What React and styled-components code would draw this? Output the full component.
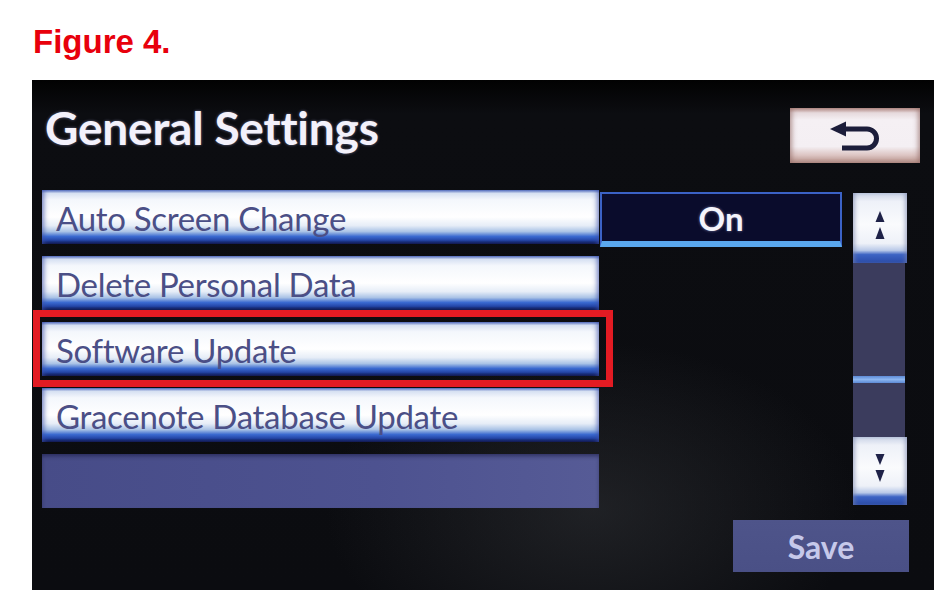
import styled, { createGlobalStyle } from 'styled-components'

const GlobalStyle = createGlobalStyle`
  html, body {
    margin: 0;
    padding: 0;
    background: #ffffff;
  }
`

const Page = styled.div`
  width: 947px;
  height: 607px;
  box-sizing: border-box;
  padding: 25px 0 0 32px;
  background: #ffffff;
  overflow: hidden;
`

const Caption = styled.h1`
  margin: 0 0 22px 1px;
  font-family: "Liberation Sans", Arial, sans-serif;
  font-weight: 700;
  font-size: 33px;
  line-height: 33px;
  color: #e8000c;
`

const Screen = styled.div`
  width: 902px;
  height: 510px;
  box-sizing: border-box;
  padding: 28px 14px 0 10px;
  display: flex;
  flex-direction: column;
  background:
    radial-gradient(ellipse 380px 240px at 560px 430px, rgba(48, 50, 54, 0.55), rgba(0, 0, 0, 0) 70%),
    linear-gradient(180deg, #020202 0px, #0c0d11 34px, #0b0c10 100%);
  font-family: Lato, "Open Sans", sans-serif;
`

const Header = styled.div`
  height: 82px;
  display: flex;
  justify-content: space-between;
  align-items: flex-start;
`

const Title = styled.h2`
  margin: -3px 0 0 3px;
  font-size: 46px;
  font-weight: 700;
  line-height: 1;
  color: #f3f1fb;
  letter-spacing: -0.2px;
  text-shadow: 0 0 3px rgba(200, 200, 255, 0.5);
`

const BackButton = styled.button`
  width: 130px;
  height: 55px;
  padding: 0;
  border: none;
  display: flex;
  align-items: center;
  justify-content: center;
  background: linear-gradient(180deg, #b48e88 0%, #e6d9dc 9%, #f5f0f4 22%, #f4eff3 70%, #dcc4c2 86%, #b38e86 100%);
  box-shadow: inset 4px 0 5px -2px rgba(150, 110, 105, 0.7), inset -4px 0 5px -2px rgba(150, 110, 105, 0.7);
`

const Body = styled.div`
  display: flex;
  align-items: flex-start;
`

const List = styled.div`
  width: 557px;
  display: flex;
  flex-direction: column;
  gap: 12px;
`

const Row = styled.div`
  position: relative;
  height: 54px;
  box-sizing: border-box;
  padding: 3px 0 0 14px;
  font-size: 33px;
  line-height: 51px;
  letter-spacing: -0.3px;
  color: #4b4f86;
  white-space: nowrap;
  background: ${p => p.$empty
    ? 'linear-gradient(90deg, #474c88 0%, #4d5290 60%, #565b96 100%)'
    : 'linear-gradient(180deg, #5670c0 0%, #d6e0f2 6%, #f4f7fc 18%, #ffffff 50%, #e6edf7 66%, #aac3e6 77%, #3b6ad0 86%, #2446a8 93%, #0d1345 100%)'};
  box-shadow: ${p => p.$empty
    ? 'inset 0 3px 4px -1px rgba(20, 22, 60, 0.6)'
    : 'inset 5px 0 5px -3px rgba(60, 80, 170, 0.7), inset -5px 0 5px -3px rgba(60, 80, 170, 0.7)'};

  ${p => p.$highlight && `
    &::after {
      content: '';
      position: absolute;
      left: -9px;
      top: -12px;
      right: -14px;
      bottom: -11px;
      border: 7px solid #e31b23;
      pointer-events: none;
    }
  `}
`

const ValueBox = styled.div`
  width: 242px;
  height: 55px;
  margin: 2px 0 0 1px;
  box-sizing: border-box;
  border: 2px solid #3b62c6;
  border-bottom: 6px solid #5aa8ee;
  background: #0a0c2c;
  display: flex;
  align-items: center;
  justify-content: center;
  font-size: 33px;
  font-weight: 700;
  color: #f4f4fb;
  text-shadow: 0 0 3px rgba(210, 210, 255, 0.5);
`

const ScrollColumn = styled.div`
  width: 54px;
  margin: 3px 0 0 11px;
  display: flex;
  flex-direction: column;
`

const ArrowButton = styled.div`
  height: ${p => p.$h}px;
  display: flex;
  align-items: center;
  justify-content: center;
  padding-bottom: 6px;
  box-sizing: border-box;
  background: linear-gradient(180deg, #c9d2e6 0%, #eef1f8 12%, #fafbfd 45%, #eef1f8 72%, #b9c9e8 82%, #3d64c4 88%, #2a4aa8 100%);
  box-shadow: inset 4px 0 4px -2px rgba(120, 130, 170, 0.6), inset -4px 0 4px -2px rgba(120, 130, 170, 0.6);
`

const Track = styled.div`
  position: relative;
  height: 174px;
  width: 52px;
  background: #3b3c5d;
`

const Thumb = styled.div`
  position: absolute;
  left: 0;
  right: 0;
  top: ${p => p.$offset}px;
  height: 7px;
  background: linear-gradient(180deg, #5d8ad6, #8cb6f0 50%, #5d8ad6);
`

const Footer = styled.div`
  margin-top: 12px;
  display: flex;
  justify-content: flex-end;
`

const SaveButton = styled.div`
  width: 176px;
  height: 52px;
  margin-right: 11px;
  display: flex;
  align-items: center;
  justify-content: center;
  background: linear-gradient(180deg, #4e548a 0%, #4a5086 100%);
  font-size: 32px;
  font-weight: 700;
  color: #c6c9ea;
`

function BackIcon () {
  return (
    <svg width='52' height='32' viewBox='0 0 52 32'>
      <polygon points='1,9 17,1.5 17,16.5' fill='#1c1d3a' />
      <path d='M15 9 H38 A9.5 9.5 0 0 1 38 28 H13' fill='none' stroke='#1c1d3a' strokeWidth='5' />
    </svg>
  )
}

function DoubleTriangle ({ down }) {
  return (
    <svg width='10' height='30' viewBox='0 0 10 30'>
      {down
        ? <>
          <polygon points='0.5,1 9.5,1 5,12' fill='#1f2248' />
          <polygon points='0.5,17 9.5,17 5,29' fill='#1f2248' />
        </>
        : <>
          <polygon points='5,1 9.5,12 0.5,12' fill='#1f2248' />
          <polygon points='5,17 9.5,29 0.5,29' fill='#1f2248' />
        </>}
    </svg>
  )
}

const items = [
  { label: 'Auto Screen Change' },
  { label: 'Delete Personal Data' },
  { label: 'Software Update', highlight: true },
  { label: 'Gracenote Database Update' },
  { label: '', empty: true }
]

export default function App () {
  return (
    <>
      <GlobalStyle />
      <Page>
        <Caption>Figure 4.</Caption>
        <Screen>
          <Header>
            <Title>General Settings</Title>
            <BackButton><BackIcon /></BackButton>
          </Header>
          <Body>
            <List>
              {items.map((item, i) => (
                <Row key={i} $empty={item.empty} $highlight={item.highlight}>{item.label}</Row>
              ))}
            </List>
            <ValueBox>On</ValueBox>
            <ScrollColumn>
              <ArrowButton $h={70}><DoubleTriangle /></ArrowButton>
              <Track><Thumb $offset={113} /></Track>
              <ArrowButton $h={68}><DoubleTriangle down /></ArrowButton>
            </ScrollColumn>
          </Body>
          <Footer>
            <SaveButton>Save</SaveButton>
          </Footer>
        </Screen>
      </Page>
    </>
  )
}
